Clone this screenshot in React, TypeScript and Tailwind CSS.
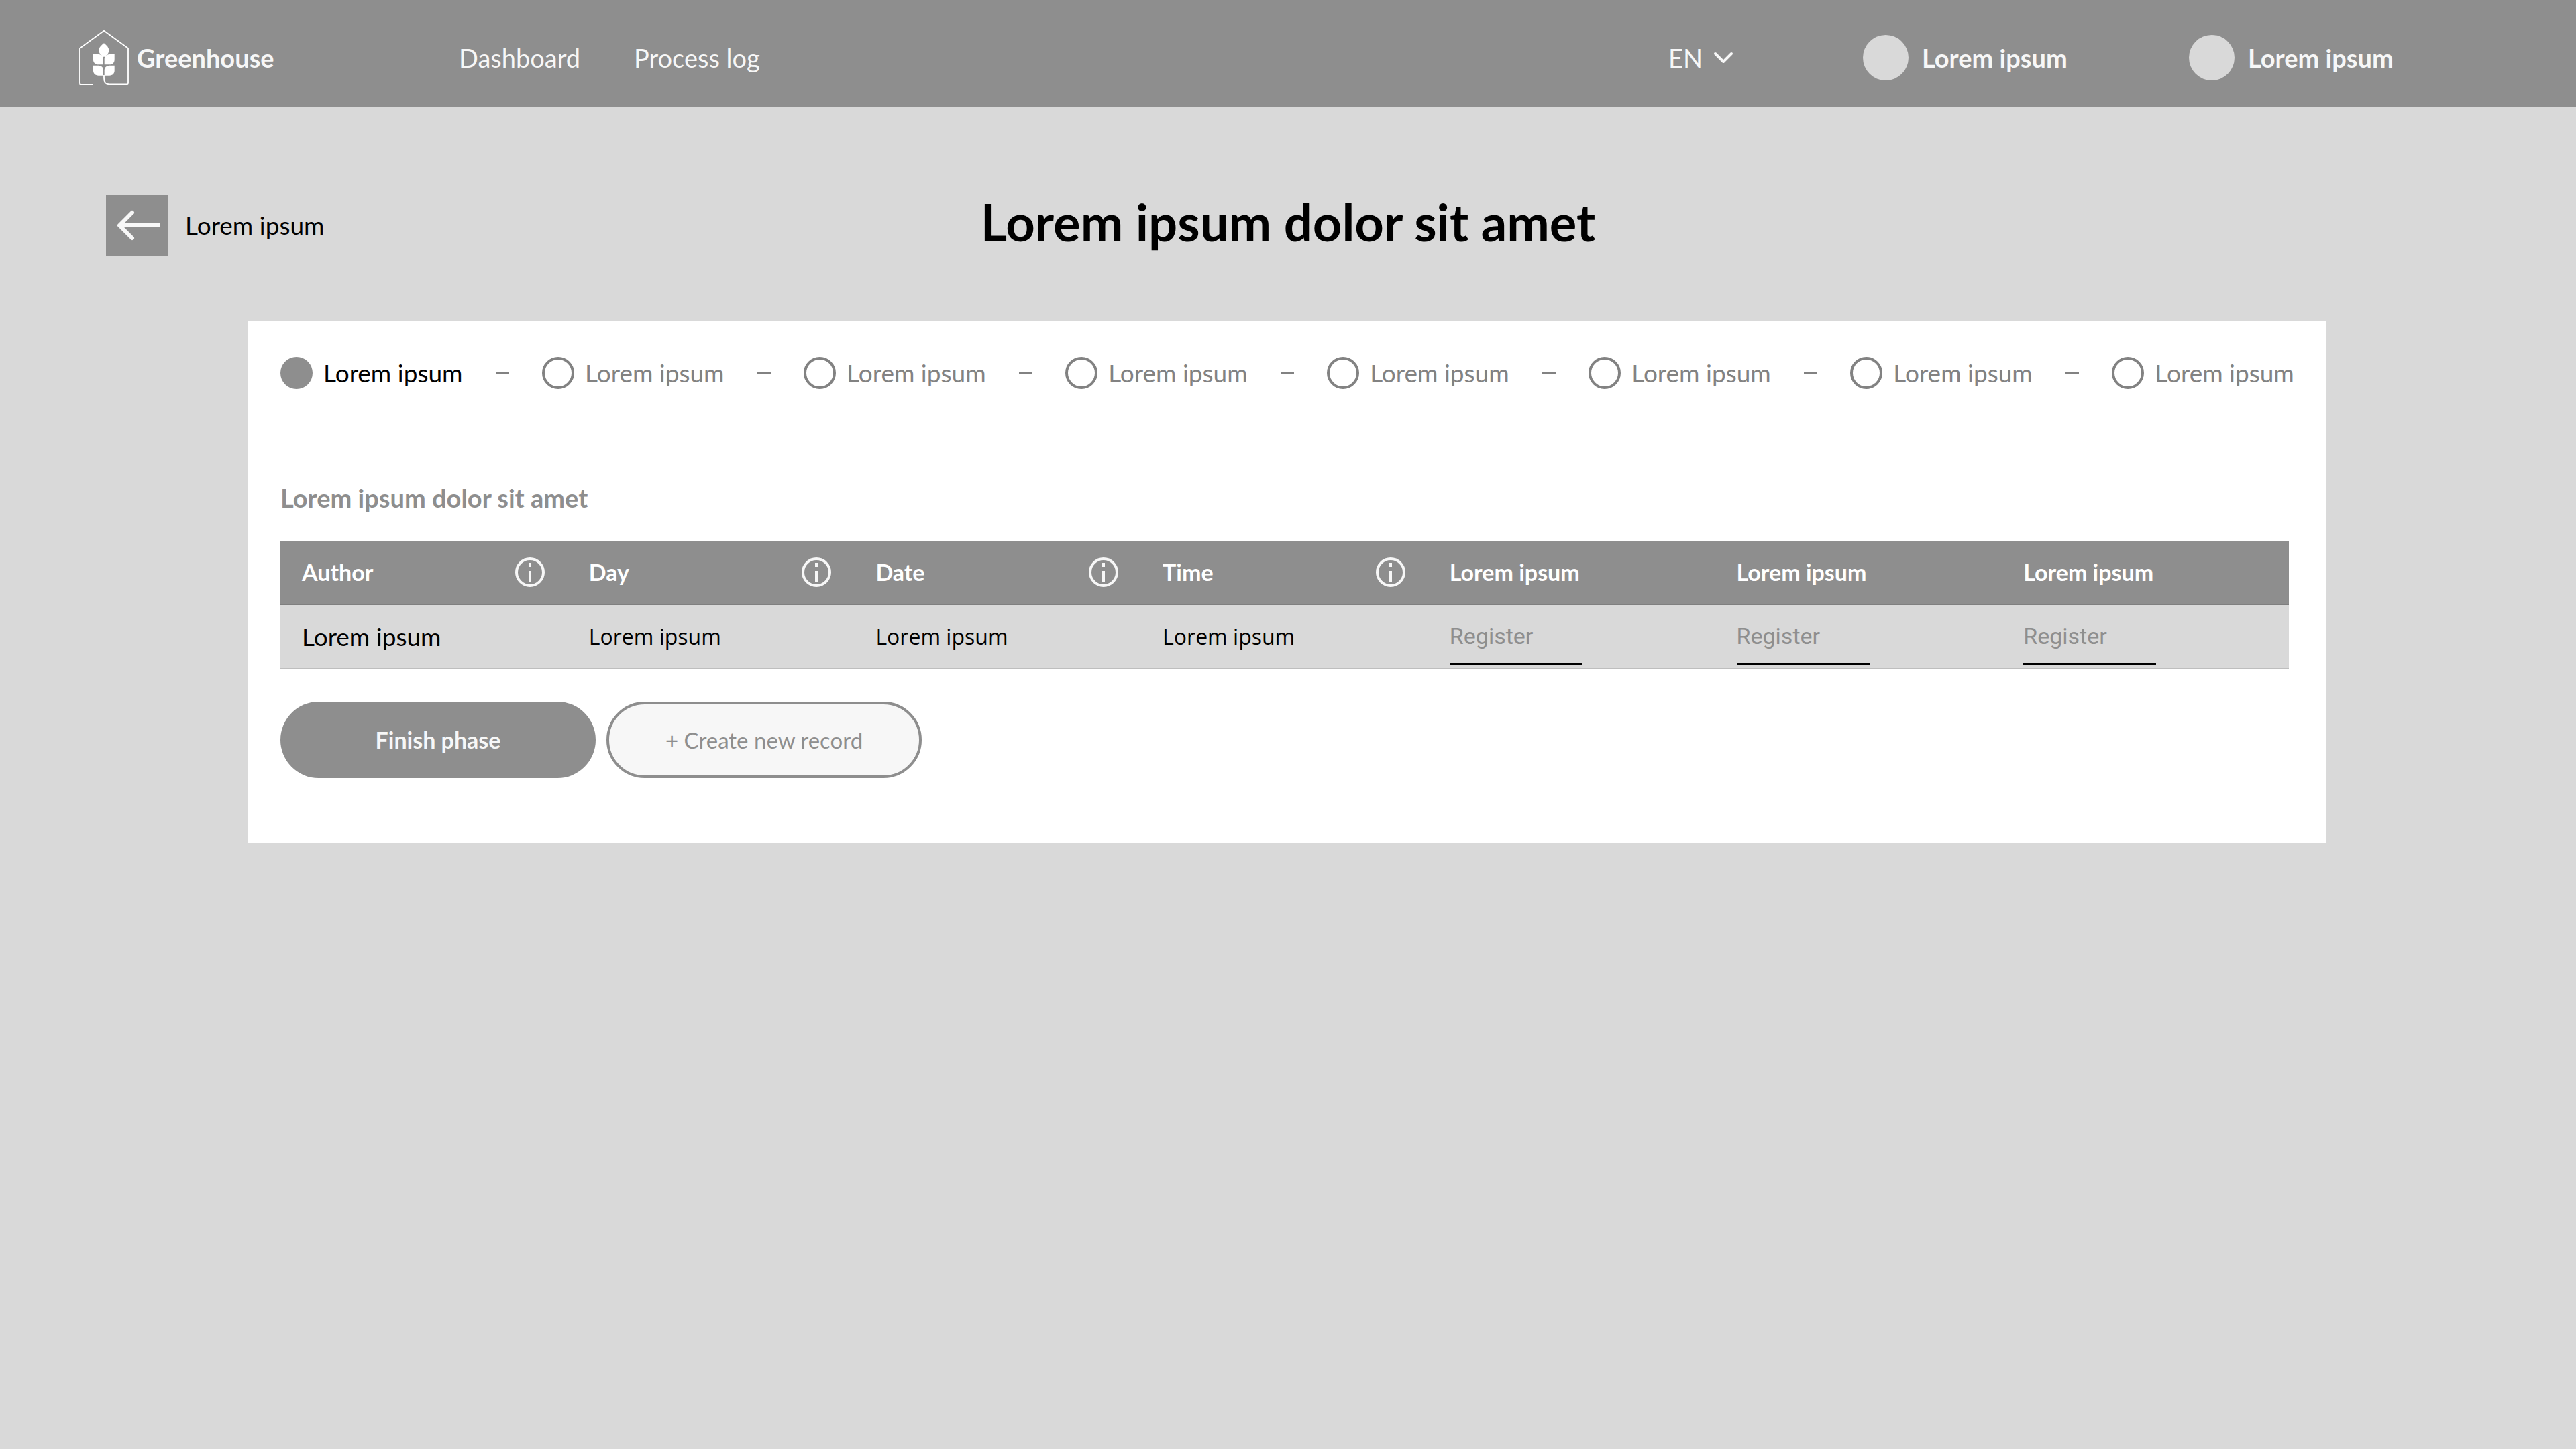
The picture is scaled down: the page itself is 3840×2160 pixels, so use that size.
import React from "react";

const steps = Array.from({ length: 8 }, (_, i) => ({ id: i, label: "Lorem ipsum", active: i === 0 }));

const columns = [
  { label: "Author", info: true },
  { label: "Day", info: true },
  { label: "Date", info: true },
  { label: "Time", info: true },
  { label: "Lorem ipsum", info: false },
  { label: "Lorem ipsum", info: false },
  { label: "Lorem ipsum", info: false },
];

function Logo() {
  return (
    <svg viewBox="48 129 234 258" className="h-[86px] w-[78px] shrink-0" fill="none" aria-hidden="true">
      <path
        d="M117 378H64Q57 378 57 371V216L165 137L273 216V370Q273 376 266 376H190Q165 376 165 350V336"
        stroke="#fff"
        strokeWidth="5.5"
        strokeLinejoin="round"
      />
      <g fill="#fff">
        <path d="M165 193C179 204 187 214 187 225C187 238 178 248 165 255C152 248 142 238 142 224C142 213 151 204 165 193Z" />
        <path d="M117 243H140C154 243 162 252 162 264V289H140C126 289 117 281 117 267Z" />
        <path d="M212 243H190C176 243 167 252 167 264V289H189C203 289 212 281 212 267Z" />
        <path d="M117 293H140C154 293 162 302 162 314V338H140C126 338 117 330 117 316Z" />
        <path d="M212 293H190C176 293 167 302 167 314V338H189C203 338 212 330 212 316Z" />
      </g>
    </svg>
  );
}

function InfoIcon() {
  return (
    <svg viewBox="0 0 48 48" className="size-12" fill="none" aria-hidden="true">
      <circle cx="24" cy="24" r="20" stroke="#f7f7f7" strokeWidth="4" />
      <path d="M24 10v6M24 22v16" stroke="#f7f7f7" strokeWidth="4" />
    </svg>
  );
}

function User({ name }: { name: string }) {
  return (
    <a href="#user" className="flex min-w-[306px] items-center gap-5 font-bold">
      <span className="size-[68px] shrink-0 rounded-full bg-[#d9d9d9]" />
      <span className="whitespace-nowrap">{name}</span>
    </a>
  );
}

function Header() {
  return (
    <header className="flex h-40 items-center bg-[#8e8e8e] pt-3 pr-[271px] pl-[116px] text-[38px] leading-[48px] text-[#f7f7f7]">
      <a href="#home" className="flex w-[568px] items-center gap-2.5 font-bold">
        <Logo />
        Greenhouse
      </a>
      <nav className="flex gap-20 whitespace-nowrap">
        <a href="#dashboard">Dashboard</a>
        <a href="#process-log">Process log</a>
      </nav>
      <div className="ml-auto flex items-center gap-[180px]">
        <div className="relative">
          <select aria-label="Language" className="block w-[110px] appearance-none bg-transparent">
            <option>EN</option>
          </select>
          <svg
            viewBox="0 0 40 48"
            className="pointer-events-none absolute top-0 right-2 h-12 w-10"
            fill="none"
            aria-hidden="true"
          >
            <path d="M8 18L20 30L32 18" stroke="#f7f7f7" strokeWidth="4" strokeLinecap="round" strokeLinejoin="round" />
          </svg>
        </div>
        <User name="Lorem ipsum" />
        <User name="Lorem ipsum" />
      </div>
    </header>
  );
}

function Stepper() {
  return (
    <ol className="flex items-center justify-between text-[37px] leading-[48px] text-[#828282]">
      {steps.map((step) => (
        <React.Fragment key={step.id}>
          {step.id > 0 && <li aria-hidden="true" className="h-[2px] w-5 bg-[#828282]" />}
          <li className="flex items-center gap-4" aria-current={step.active ? "step" : undefined}>
            <span
              className={
                step.active
                  ? "size-12 shrink-0 rounded-full bg-[#8e8e8e]"
                  : "size-12 shrink-0 rounded-full border-4 border-[#828282]"
              }
            />
            <span className={step.active ? "whitespace-nowrap text-black" : "whitespace-nowrap"}>{step.label}</span>
          </li>
        </React.Fragment>
      ))}
    </ol>
  );
}

function Records() {
  return (
    <div className="mt-10 pr-2">
      <table className="w-full table-fixed border-separate border-spacing-0 text-left leading-[44px]">
        <thead>
          <tr className="bg-[#8e8e8e] text-[34px] text-white">
            {columns.map((column, i) => (
              <th key={i} scope="col" className="h-24 border-b-2 border-[#7f7f7f] px-8 py-0 font-bold">
                <div className="flex items-center justify-between">
                  {column.label}
                  {column.info && (
                    <button type="button" aria-label={`About ${column.label}`}>
                      <InfoIcon />
                    </button>
                  )}
                </div>
              </th>
            ))}
          </tr>
        </thead>
        <tbody>
          <tr className="bg-[#d9d9d9]">
            <td className="h-24 border-b-2 border-[#bebebe] px-8 py-0 text-[37px]">Lorem ipsum</td>
            {[0, 1, 2].map((i) => (
              <td
                key={i}
                className="h-24 border-b-2 border-[#bebebe] px-8 py-0 font-['Open_Sans',sans-serif] text-[32px]"
              >
                Lorem ipsum
              </td>
            ))}
            {[0, 1, 2].map((i) => (
              <td key={i} className="h-24 border-b-2 border-[#bebebe] px-8 py-0">
                <input
                  type="text"
                  aria-label="Lorem ipsum"
                  placeholder="Register"
                  className="block h-[84px] w-[198px] border-b-2 border-black bg-transparent font-[Roboto,sans-serif] text-[34px] placeholder:text-[#8e8e8e]"
                />
              </td>
            ))}
          </tr>
        </tbody>
      </table>
    </div>
  );
}

export default function App() {
  return (
    <div className="min-h-screen bg-[#d9d9d9] font-[Lato,sans-serif] text-black">
      <Header />
      <main className="pt-[130px]">
        <div className="grid grid-cols-[1fr_auto_1fr] items-start px-[158px]">
          <a href="#back" className="flex items-center gap-[26px] text-[37px] leading-[48px]">
            <span className="bg-[#8e8e8e]">
              <svg viewBox="0 0 92 92" className="size-[92px]" fill="none" stroke="#f7f7f7" strokeWidth="6" aria-hidden="true">
                <path d="M20 46H80" />
                <path d="M39 27L20 46L39 65" strokeLinecap="round" strokeLinejoin="round" />
              </svg>
            </span>
            Lorem ipsum
          </a>
          <h1 className="text-[76px] leading-[82px] font-bold">Lorem ipsum dolor sit amet</h1>
        </div>
        <section className="mt-24 mr-[372px] ml-[370px] bg-white px-12 pt-[54px] pb-24">
          <Stepper />
          <h2 className="mt-[138px] text-[38px] leading-[48px] font-bold text-[#8e8e8e]">Lorem ipsum dolor sit amet</h2>
          <Records />
          <div className="mt-12 flex gap-4 leading-[44px]">
            <button
              type="button"
              className="h-[114px] w-[470px] rounded-full bg-[#8e8e8e] text-[34px] font-bold text-[#f7f7f7]"
            >
              Finish phase
            </button>
            <button
              type="button"
              className="h-[114px] w-[470px] rounded-full border-4 border-[#8e8e8e] bg-[#f7f7f7] text-[33px] text-[#8e8e8e]"
            >
              + Create new record
            </button>
          </div>
        </section>
      </main>
    </div>
  );
}
